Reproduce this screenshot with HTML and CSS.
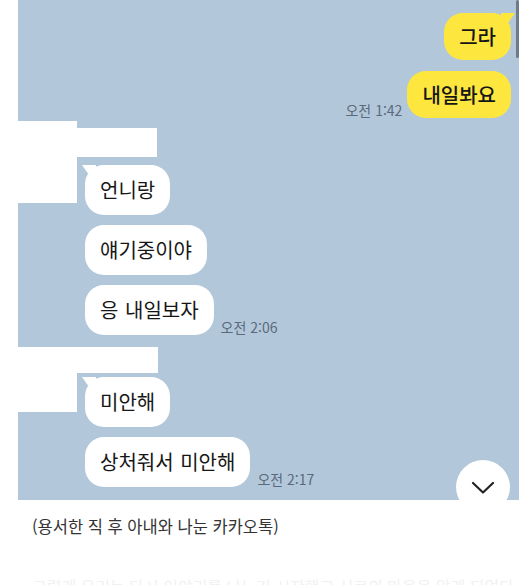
FILE: index.html
```html
<!DOCTYPE html>
<html lang="ko">
<head>
<meta charset="utf-8">
<title>카카오톡</title>
<link rel="stylesheet" href="styles.css">
</head>
<body>
<div class="chat">
  <div class="scrollbar"></div>
  <div class="sent-group">
    <div class="row"><div class="bubble mine tail">그라</div></div>
    <div class="row"><span class="time">오전 1:42</span><div class="bubble mine">내일봐요</div></div>
  </div>
  <div class="recv-group g1">
    <div class="avatar"></div>
    <div class="msgs">
      <div class="name"></div>
      <div class="row"><div class="bubble theirs tail">언니랑</div></div>
      <div class="row"><div class="bubble theirs">얘기중이야</div></div>
      <div class="row"><div class="bubble theirs">응 내일보자</div><span class="time">오전 2:06</span></div>
    </div>
  </div>
  <div class="recv-group g2">
    <div class="avatar"></div>
    <div class="msgs">
      <div class="name"></div>
      <div class="row"><div class="bubble theirs tail">미안해</div></div>
      <div class="row"><div class="bubble theirs">상처줘서 미안해</div><span class="time">오전 2:17</span></div>
    </div>
  </div>
  <button class="scroll-down" aria-label="아래로">
    <svg width="24" height="14" viewBox="0 0 24 14"><polyline points="2,2 12,11.5 22,2" fill="none" stroke="#222" stroke-width="2.2" stroke-linecap="round" stroke-linejoin="round"/></svg>
  </button>
</div>
<p class="caption">(용서한 직 후 아내와 나눈 카카오톡)</p>
<p class="faint">그렇게 우리는 다시 이야기를 나누기 시작했고 서로의 마음을 알게 되었다</p>
</body>
</html>
```
FILE: styles.css
```css
body {
  margin: 0;
  background: #fff;
  font-family: "Noto Sans CJK KR", "Noto Sans", sans-serif;
}

.chat {
  position: relative;
  margin-left: 18px;
  width: 501px;
  height: 500px;
  box-sizing: border-box;
  padding-top: 13px;
  background: #b2c7d9;
  display: flex;
  flex-direction: column;
}

.scrollbar {
  position: absolute;
  right: 0;
  top: 0;
  width: 3px;
  height: 58px;
  background: #6e7b89;
  border-radius: 2px;
}

.sent-group {
  display: flex;
  flex-direction: column;
  align-items: flex-end;
  gap: 11px;
  padding-right: 8px;
}

.row {
  display: flex;
  align-items: flex-end;
  gap: 5px;
}

.bubble {
  position: relative;
  display: flex;
  align-items: center;
  box-sizing: border-box;
  padding: 0 15px;
  border-radius: 19px;
  font-size: 20px;
  line-height: 26px;
  word-spacing: 1px;
  color: #161616;
}

.mine {
  height: 47px;
  background: #fde73f;
  font-weight: 500;
}

.theirs {
  height: 50px;
  background: #fff;
}

.tail::before {
  content: "";
  position: absolute;
  top: 0;
  width: 14px;
  height: 14px;
  background: inherit;
}

.mine.tail::before {
  right: -4px;
  clip-path: polygon(0 0, 100% 0, 30% 100%, 0 100%);
}

.theirs.tail::before {
  left: -3px;
  clip-path: polygon(0 0, 100% 0, 100% 100%, 70% 100%);
}

.time {
  font-size: 14px;
  line-height: 14px;
  color: #5a6a7d;
  margin-bottom: 1px;
  white-space: nowrap;
}

.recv-group {
  display: flex;
  align-items: flex-start;
  margin-top: 3px;
}

.recv-group.g2 {
  margin-top: 12px;
}

.avatar {
  width: 59px;
  background: #fff;
}

.g1 .avatar {
  height: 82px;
}

.g2 .avatar {
  height: 65px;
}

.msgs {
  display: flex;
  flex-direction: column;
  gap: 10px;
}

.msgs .row {
  margin-left: 8px;
  gap: 7px;
}

.name {
  width: 80px;
  background: #fff;
}

.g1 .name {
  height: 29px;
  margin-top: 7px;
  margin-bottom: -2px;
}

.g2 .name {
  width: 81px;
  height: 26px;
  margin-bottom: -6px;
}

.scroll-down {
  position: absolute;
  left: 438px;
  top: 460px;
  width: 54px;
  height: 54px;
  padding: 2px 0 0;
  border: none;
  border-radius: 50%;
  background: #fff;
  display: flex;
  align-items: center;
  justify-content: center;
}

.caption {
  margin: 14px 0 0;
  padding-left: 32px;
  font-size: 16.5px;
  line-height: 24px;
  color: #333;
}

.faint {
  margin: 36px 0 0;
  padding-left: 32px;
  width: 480px;
  font-size: 16px;
  line-height: 24px;
  color: #f1f1f1;
  white-space: nowrap;
  overflow: hidden;
}
```
